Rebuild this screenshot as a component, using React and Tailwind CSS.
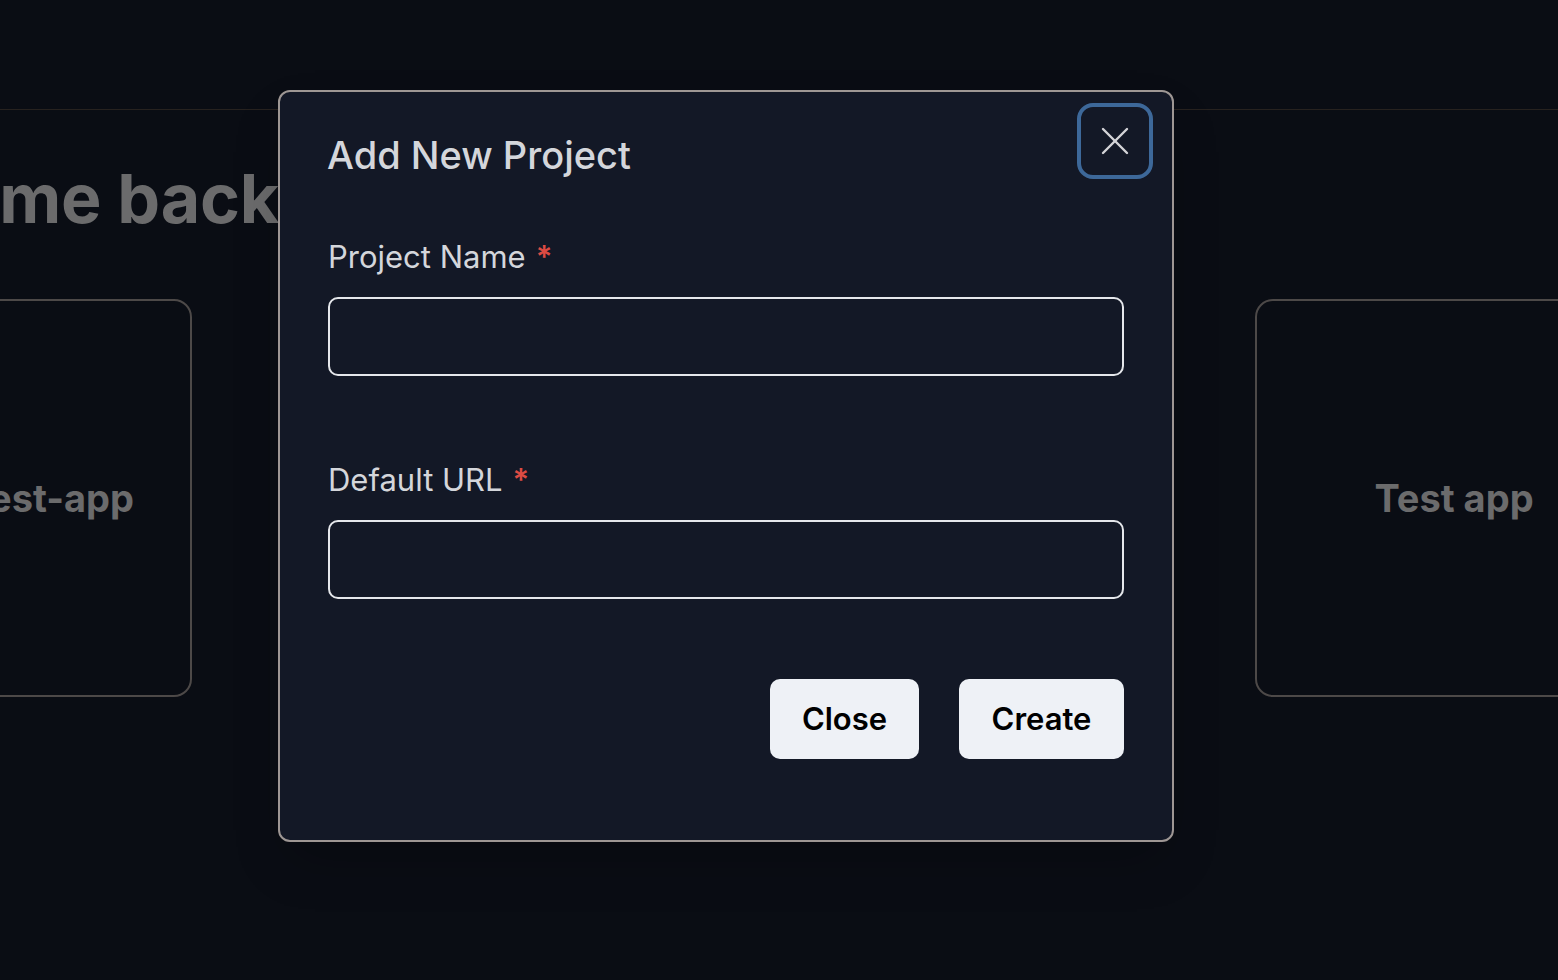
import React from "react";

function XIcon() {
  return (
    <svg width="28" height="28" viewBox="0 0 28 28" fill="none" stroke="#d4d4d8" strokeWidth="2.4" strokeLinecap="round">
      <path d="M2 2 L26 26" />
      <path d="M26 2 L2 26" />
    </svg>
  );
}

function Field({ label }) {
  return (
    <div className="flex flex-col">
      <div className="flex items-center text-[31px] leading-[40px] text-[#d4d6db]">
        <span>{label}</span>
        <span className="ml-[10px] text-[#dc4b43] font-semibold">*</span>
      </div>
      <div className="mt-[20px] h-[79px] rounded-[10px] border-2 border-[#e5e7eb] bg-[#131826]" />
    </div>
  );
}

export default function App() {
  return (
    <div
      className="relative w-[1558px] h-[980px] overflow-hidden bg-[#0a0d14]"
      style={{ fontFamily: "Inter, 'Noto Sans', sans-serif" }}
    >
      {/* Header bar */}
      <div className="h-[110px] border-b border-[#27221f]" />

      {/* Welcome heading */}
      <div className="mt-[48px] w-[279px] flex justify-end whitespace-nowrap">
        <h1 className="text-[68px] leading-[80px] font-bold text-[#6b6b6c] tracking-[-0.2px]">Welcome back</h1>
      </div>

      {/* Cards row */}
      <div className="mt-[61px] flex gap-[1063px] ml-[-206px]">
        <div className="shrink-0 w-[398px] h-[398px] rounded-[18px] border-2 border-[#4d4948] flex items-center justify-end pr-[56px]">
          <span className="text-[38px] font-bold text-[#6b6b6c]">Test-app</span>
        </div>
        <div className="shrink-0 w-[398px] h-[398px] rounded-[18px] border-2 border-[#4d4948] flex items-center justify-center">
          <span className="text-[38px] font-bold text-[#6b6b6c]">Test app</span>
        </div>
      </div>

      {/* Modal */}
      <div className="absolute left-[278px] top-[90px] w-[896px] h-[752px] rounded-[12px] border-2 border-[#9e9794] bg-[#131826] px-[48px] pt-[39px] pb-[80px] flex flex-col shadow-2xl">
        <button className="absolute right-[19px] top-[11px] w-[76px] h-[76px] rounded-[16px] border-4 border-[#3d6899] flex items-center justify-center">
          <XIcon />
        </button>
        <h2 className="ml-[-1px] text-[38px] leading-[48px] font-medium text-[#d4d6db]">Add New Project</h2>
        <div className="mt-[58px]">
          <Field label="Project Name" />
        </div>
        <div className="mt-[84px]">
          <Field label="Default URL" />
        </div>
        <div className="mt-[80px] flex justify-end gap-[40px]">
          <button className="h-[80px] w-[149px] rounded-[10px] bg-[#eef1f6] text-[31px] font-semibold text-black">Close</button>
          <button className="h-[80px] w-[165px] rounded-[10px] bg-[#eef1f6] text-[31px] font-semibold text-black">Create</button>
        </div>
      </div>
    </div>
  );
}
